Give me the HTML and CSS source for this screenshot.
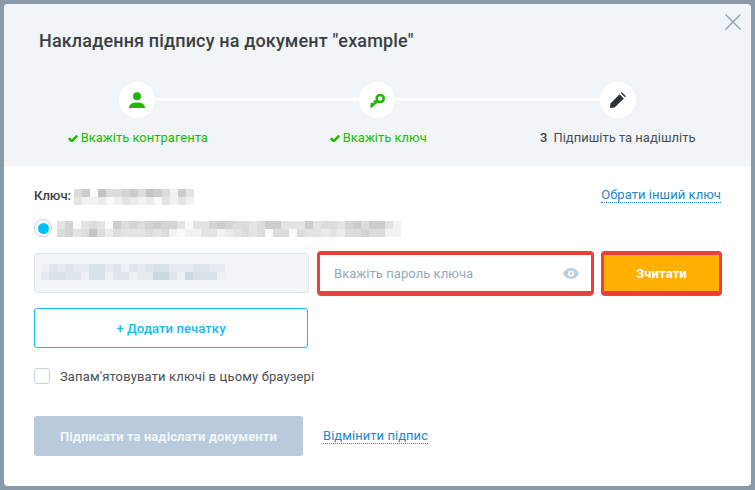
FILE: index.html
```html
<!DOCTYPE html>
<html lang="uk">
<head>
<meta charset="utf-8">
<title>Накладення підпису</title>
<link rel="stylesheet" href="styles.css">
</head>
<body>
<div class="modal">
  <header class="head">
    <button class="close" aria-label="Закрити">
      <svg width="16" height="16" viewBox="0 0 16 16"><path d="M.5.5l15 15M15.500.5l-15 15"/></svg>
    </button>
    <h1 class="title">Накладення підпису на документ "example"</h1>
    <div class="steps">
      <div class="line"></div>
      <div class="step done">
        <div class="circle">
          <svg width="16" height="16" viewBox="0 0 16 16"><circle cx="8" cy="4.200" r="4"/><path d="M0 16c0-3.800 3.500-5.500 8-5.500s8 1.700 8 5.500z"/></svg>
        </div>
        <div class="label"><svg class="check" width="10" height="8" viewBox="0 0 10 8"><path d="M.8 4.200l3 3 5.400-5.600" /></svg>Вкажіть контрагента</div>
      </div>
      <div class="step done">
        <div class="circle">
          <svg width="16" height="16" viewBox="0 0 16 16"><circle cx="11.200" cy="6.500" r="3.500" class="ring"/><path class="shaft" d="M8.600 9L1.500 15M3.800 13L2 11.200M6.800 10.500L5 8.700"/></svg>
        </div>
        <div class="label"><svg class="check" width="10" height="8" viewBox="0 0 10 8"><path d="M.8 4.200l3 3 5.400-5.600" /></svg>Вкажіть ключ</div>
      </div>
      <div class="step">
        <div class="circle pencil">
          <svg width="16" height="16" viewBox="0 0 16 16"><path d="M0 16l.4-4.600L9.600 2.200l4.200 4.200L4.600 15.600zM10.700 1.100l1-1 4.200 4.200-1 1z"/></svg>
        </div>
        <div class="label"><b class="num">3</b>Підпишіть та надішліть</div>
      </div>
    </div>
  </header>
  <main class="content">
    <div class="key-row">
      <div class="key-info">
        <span class="key-label">Ключ:</span>
        <div class="px px15">
          <i class="e"></i><i class="g"></i><i class="a"></i><i class="h"></i><i class="e"></i><i class="e"></i><i class="f"></i><i class="g"></i><i class="e"></i><i class="h"></i><i class="g"></i><i class="e"></i><i class="b"></i><i class="g"></i><i class="d"></i>
          <i class="d"></i><i class="b"></i><i class="b"></i><i class="c"></i><i class="a"></i><i class="b"></i><i class="d"></i><i class="c"></i><i class="b"></i><i class="c"></i><i class="a"></i><i class="d"></i><i class="b"></i><i class="d"></i><i class="b"></i>
        </div>
      </div>
      <a class="link" href="#">Обрати інший ключ</a>
    </div>
    <div class="radio-row">
      <span class="radio"></span>
      <div class="px px43">
        <i class="d"></i><i class="f"></i><i class="a"></i><i class="d"></i><i class="e"></i><i class="d"></i><i class="a"></i><i class="g"></i><i class="e"></i><i class="f"></i><i class="e"></i><i class="f"></i><i class="g"></i><i class="f"></i><i class="f"></i><i class="d"></i><i class="a"></i><i class="d"></i><i class="d"></i><i class="f"></i><i class="g"></i><i class="f"></i><i class="e"></i><i class="e"></i><i class="d"></i><i class="e"></i><i class="g"></i><i class="g"></i><i class="d"></i><i class="d"></i><i class="d"></i><i class="g"></i><i class="d"></i><i class="e"></i><i class="e"></i><i class="d"></i><i class="f"></i><i class="g"></i><i class="e"></i><i class="g"></i><i class="g"></i><i class="d"></i><i class="b"></i>
        <i class="e"></i><i class="f"></i><i class="d"></i><i class="e"></i><i class="h"></i><i class="e"></i><i class="c"></i><i class="e"></i><i class="d"></i><i class="d"></i><i class="d"></i><i class="e"></i><i class="d"></i><i class="e"></i><i class="b"></i><i class="a"></i><i class="b"></i><i class="b"></i><i class="d"></i><i class="d"></i><i class="b"></i><i class="c"></i><i class="d"></i><i class="e"></i><i class="d"></i><i class="e"></i><i class="a"></i><i class="e"></i><i class="e"></i><i class="a"></i><i class="e"></i><i class="d"></i><i class="d"></i><i class="c"></i><i class="d"></i><i class="c"></i><i class="e"></i><i class="e"></i><i class="f"></i><i class="e"></i><i class="e"></i><i class="b"></i><i class="b"></i>
      </div>
    </div>
    <div class="fields">
      <div class="left-col">
        <div class="key-box">
          <div class="px px23">
            <i class="p"></i><i class="r"></i><i class="q"></i><i class="r"></i><i class="q"></i><i class="q"></i><i class="s"></i><i class="s"></i><i class="q"></i><i class="r"></i><i class="p"></i><i class="r"></i><i class="q"></i><i class="r"></i><i class="s"></i><i class="s"></i><i class="q"></i><i class="q"></i><i class="q"></i><i class="r"></i><i class="r"></i><i class="q"></i><i class="q"></i>
            <i class="q"></i><i class="s"></i><i class="s"></i><i class="r"></i><i class="r"></i><i class="p"></i><i class="s"></i><i class="s"></i><i class="p"></i><i class="r"></i><i class="r"></i><i class="p"></i><i class="q"></i><i class="q"></i><i class="t"></i><i class="t"></i><i class="r"></i><i class="p"></i><i class="t"></i><i class="s"></i><i class="s"></i><i class="s"></i><i class="p"></i>
          </div>
        </div>
        <button class="stamp">+ Додати печатку</button>
      </div>
      <div class="password">
        <span class="placeholder">Вкажіть пароль ключа</span>
        <svg class="eye" width="16" height="11" viewBox="0 0 16 11"><path fill-rule="evenodd" d="M0 5.500C1.500 2.200 4.500 0 8 0s6.500 2.200 8 5.500C14.500 8.800 11.500 11 8 11S1.500 8.800 0 5.500zM8 2.400a3.100 3.100 0 1 0 0 6.200 3.100 3.100 0 0 0 0-6.200zM8 4a1.500 1.500 0 1 1 0 3 1.500 1.500 0 0 1 0-3z"/></svg>
      </div>
      <button class="read">Зчитати</button>
    </div>
    <label class="remember"><span class="box"></span>Запам'ятовувати ключі в цьому браузері</label>
    <div class="actions">
      <button class="submit">Підписати та надіслати документи</button>
      <a class="link" href="#">Відмінити підпис</a>
    </div>
  </main>
</div>
</body>
</html>
```
FILE: styles.css
```css
* { box-sizing: border-box; }
html, body { height: 100%; }
body {
  margin: 0;
  padding: 4px;
  background: #8a9aa9;
  font-family: Roboto, "Liberation Sans", sans-serif;
  font-size: 13px;
  color: #444;
  overflow: hidden;
}
.modal {
  width: 747px;
  height: 482px;
  background: #fff;
  border-radius: 4px;
  overflow: hidden;
}
.head {
  position: relative;
  height: 162px;
  background: #f2f5f8;
  padding: 25px 12.500px 0;
}
.close {
  position: absolute;
  top: 10px;
  right: 10px;
  width: 16px;
  height: 16px;
  padding: 0;
  border: 0;
  background: none;
  display: flex;
}
.close path { stroke: #8fa6ba; stroke-width: 1.500; fill: none; }
.title {
  margin: 0 0 0 22.500px;
  font-size: 18px;
  line-height: 24px;
  font-weight: 500;
  letter-spacing: .15px;
  color: #3a3f44;
}
.steps {
  position: relative;
  margin-top: 29px;
  display: grid;
  grid-template-columns: repeat(3, 240.500px);
}
.line {
  position: absolute;
  top: 16px;
  left: 120px;
  width: 481px;
  height: 3px;
  background: #fff;
}
.step {
  position: relative;
  display: flex;
  flex-direction: column;
  align-items: center;
}
.circle {
  width: 36px;
  height: 36px;
  border-radius: 50%;
  background: #fff;
  display: flex;
  align-items: center;
  justify-content: center;
  fill: #1fb800;
}
.pencil { fill: #2f3237; }
.ring { fill: none; stroke: #1fb800; stroke-width: 2.600; }
.shaft { fill: none; stroke: #1fb800; stroke-width: 2.400; }
.label {
  margin-top: 12px;
  line-height: 16px;
  color: #4a4e52;
  display: flex;
  align-items: center;
}
.done .label { color: #1fb800; margin-left: 2px; }
.check { margin-right: 3px; }
.check path { fill: none; stroke: #1fb800; stroke-width: 2.500; }
.num { font-weight: 500; margin-right: 6px; color: #3a3f44; }
.content { padding: 0 30px; }
.key-row {
  height: 60px;
  padding-top: 22px;
  display: flex;
  justify-content: space-between;
  align-items: flex-start;
}
.key-info { display: flex; align-items: flex-start; gap: 3px; }
.key-label { font-weight: 500; line-height: 16px; color: #3a3f44; }
.px15 { margin-top: 1px; }
.link {
  color: #1d87cc;
  text-decoration: none;
  border-bottom: 1px dotted #1d87cc;
  line-height: 15px;
  letter-spacing: .05px;
}
.key-row .link { margin-top: -1px; }
.px { display: grid; grid-auto-rows: 8px; }
.px i { display: block; }
.px15 { grid-template-columns: repeat(15, 8px); }
.px43 { grid-template-columns: repeat(43, 8px); margin-top: 2px; }
.px23 { grid-template-columns: repeat(23, 8px); }
.a { background: #fafafa; }
.b { background: #f2f2f2; }
.c { background: #ebebeb; }
.d { background: #e4e4e4; }
.e { background: #dcdcdc; }
.f { background: #d4d4d4; }
.g { background: #ccc; }
.h { background: #c4c4c4; }
.p { background: #eef2f6; }
.q { background: #e6ebf1; }
.r { background: #dfe5ec; }
.s { background: #d8e0e8; }
.t { background: #ced8e1; }
.radio-row {
  display: flex;
  align-items: center;
  gap: 5px;
  margin-top: -7px;
  height: 18px;
}
.radio {
  width: 18px;
  height: 18px;
  border-radius: 50%;
  border: 1px solid #bdd0e0;
  background: #fff;
  position: relative;
  flex: none;
  display: flex;
  align-items: center;
  justify-content: center;
}
.radio::after {
  content: "";
  width: 11px;
  height: 11px;
  border-radius: 50%;
  background: #00bfff;
}
.fields {
  margin-top: 14px;
  display: flex;
  align-items: flex-start;
}
.left-col { flex: none; width: 275px; margin-right: 8px; padding-top: 2px; }
.key-box {
  height: 40px;
  background: #f2f5f8;
  border: 1px solid #dde5ec;
  border-radius: 3px;
  padding: 10px 6px;
}
.stamp {
  display: block;
  margin-top: 15px;
  width: 274px;
  height: 40px;
  background: #fff;
  border: 1px solid #10bdf5;
  border-radius: 3px;
  font: 500 13px Roboto, sans-serif;
  letter-spacing: .1px;
  color: #14b9f5;
}
.password {
  flex: none;
  width: 277px;
  height: 44px;
  border: solid #f23b3b;
  border-width: 4px 3.500px;
  border-radius: 4px;
  box-shadow: 0 1px 0 #777;
  display: flex;
  align-items: center;
  justify-content: space-between;
  padding: 0 12px 0 14px;
}
.placeholder { color: #94a9bd; letter-spacing: .05px; }
.eye { fill: #bccfe0; }
.read {
  flex: none;
  margin-left: 7px;
  width: 121px;
  height: 44px;
  border: solid #f23b3b;
  border-width: 4px 3.500px;
  border-radius: 4px;
  background: #ffb000;
  box-shadow: 0 1px 0 #777;
  color: #fff;
  font: 700 13px Roboto, sans-serif;
  letter-spacing: .1px;
  padding: 0;
}
.remember {
  display: flex;
  align-items: center;
  gap: 10px;
  margin-top: 20px;
  height: 16px;
  letter-spacing: .15px;
  color: #4a4e52;
}
.box {
  width: 16px;
  height: 16px;
  border: 1px solid #c5d5e5;
  border-radius: 3px;
  background: #fff;
}
.actions {
  margin-top: 32px;
  display: flex;
  align-items: center;
  gap: 20px;
}
.submit {
  width: 269px;
  height: 40px;
  border: 0;
  border-radius: 3px;
  background: #b8cadb;
  color: #f3f6f9;
  font: 700 13px Roboto, sans-serif;
  letter-spacing: .06px;
  padding: 0;
}
```
